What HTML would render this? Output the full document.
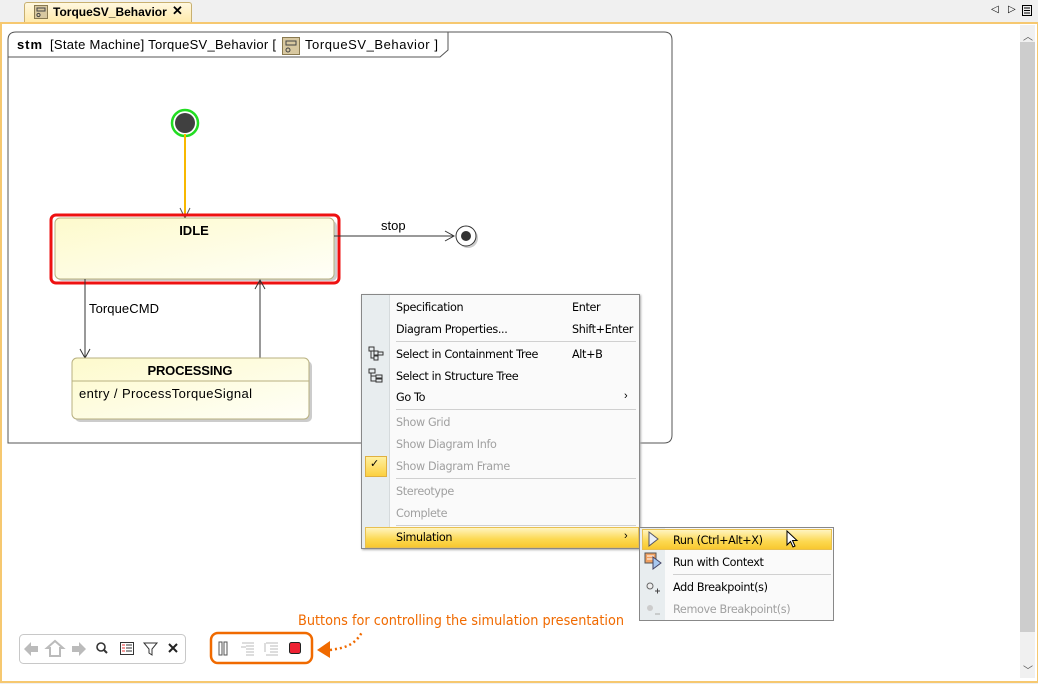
<!DOCTYPE html>
<html><head><style>
body{margin:0;width:1038px;height:684px;position:relative;background:#f0f0f0;font-family:"Liberation Sans",sans-serif;overflow:hidden}
.abs{position:absolute}
.mi{position:absolute;left:34px;color:#000;font-family:"DejaVu Sans","Liberation Sans",sans-serif;font-size:11.2px;letter-spacing:-0.35px}
.sc{position:absolute;left:210px;font-family:"DejaVu Sans","Liberation Sans",sans-serif;font-size:11.2px;letter-spacing:-0.35px}
.dis{color:#a0a0a0}
.sep{position:absolute;left:34px;right:3px;height:1px;background:#d0d0d0}
.sm{position:absolute;left:33px;font-family:'DejaVu Sans',sans-serif;font-size:11.2px;letter-spacing:-0.35px}
</style></head><body>
<div class="abs" style="left:24px;top:2px;width:166px;height:20px;background:linear-gradient(#fff8e0,#ffe9a8);border:1px solid #c8b070;border-bottom:none;border-radius:3px 3px 0 0"></div>
<svg class="abs" style="left:34px;top:5px" width="14" height="14"><rect x="0.5" y="0.5" width="13" height="13" fill="#d8c8a0" stroke="#8a7a50"/><rect x="3" y="3" width="8" height="3" fill="none" stroke="#444"/><circle cx="4.5" cy="10" r="1.6" fill="none" stroke="#444"/></svg>
<div class="abs" style="left:53px;top:5px;font-size:12px;font-weight:bold">TorqueSV_Behavior</div>
<div class="abs" style="left:172px;top:3px;font-size:13px;font-weight:bold">✕</div>
<div class="abs" style="left:991px;top:4px;font-size:10px">◁</div>
<div class="abs" style="left:1008px;top:4px;font-size:10px">▷</div>
<svg class="abs" style="left:1022px;top:5px" width="10" height="11"><rect x="0.5" y="0.5" width="9" height="10" fill="none" stroke="#000"/><path d="M2 3h6M2 5.5h6M2 8h6" stroke="#000"/></svg>
<div class="abs" style="left:0;top:22px;width:1035px;height:657px;background:#fff;border:2px solid #f6c870"></div>
<div class="abs" style="left:1020px;top:25px;width:15px;height:653px;background:#f0f0f0"></div>
<div class="abs" style="left:1020px;top:42px;width:15px;height:590px;background:#cdcdcd"></div>
<div class="abs" style="left:1023px;top:28px;font-size:10px;color:#555">︿</div>
<div class="abs" style="left:1023px;top:662px;font-size:10px;color:#555">﹀</div>
<svg class="abs" style="left:0;top:0" width="1020" height="684">
<defs><linearGradient id="g" x1="0" y1="0" x2="1" y2="1"><stop offset="0" stop-color="#fdfacc"/><stop offset="1" stop-color="#fffff8"/></linearGradient></defs>
<path d="M8 443 V40 Q8 32 16 32 H664 Q672 32 672 40 V435 Q672 443 664 443 Z" fill="none" stroke="#555" stroke-width="1"/>
<path d="M8 57 H440 L448 50 V32" fill="none" stroke="#555"/>
<text x="17" y="49" font-size="13" font-weight="bold" font-family="Liberation Sans" textLength="25">stm</text>
<text x="50" y="49" font-size="13" font-family="Liberation Sans" textLength="226">[State Machine] TorqueSV_Behavior [</text>
<rect x="282.5" y="37.5" width="17" height="17" fill="#d8c8a0" stroke="#8a7a50"/>
<rect x="286" y="41" width="10" height="4" fill="none" stroke="#444"/><circle cx="288" cy="50" r="2" fill="none" stroke="#444"/>
<text x="305" y="49" font-size="13" font-family="Liberation Sans" textLength="133">TorqueSV_Behavior ]</text>
<circle cx="185" cy="123" r="13" fill="#fff" stroke="#22dd22" stroke-width="2.5"/>
<circle cx="185" cy="123" r="10" fill="#404040"/>
<line x1="185" y1="134" x2="185" y2="218" stroke="#f8b800" stroke-width="2"/>
<path d="M180 208 L185 218 L190 208" fill="none" stroke="#555"/>
<rect x="51" y="215" width="288" height="68" rx="5" fill="none" stroke="#ee1111" stroke-width="3"/>
<rect x="57" y="221" width="280" height="60" rx="5" fill="#ccc"/>
<rect x="55" y="218" width="279" height="61" rx="5" fill="url(#g)" stroke="#b8b080"/>
<text x="194" y="235" font-size="13" font-weight="bold" text-anchor="middle" font-family="Liberation Sans">IDLE</text>
<line x1="334" y1="236" x2="454" y2="236" stroke="#333"/>
<path d="M445 231 L454 236 L445 241" fill="none" stroke="#333"/>
<circle cx="468" cy="238" r="10" fill="#ccc"/>
<circle cx="466" cy="236" r="10" fill="#fff" stroke="#333"/>
<circle cx="466" cy="236" r="5" fill="#333"/>
<text x="381" y="230" font-size="13" font-family="Liberation Sans">stop</text>
<line x1="85" y1="279" x2="85" y2="358" stroke="#333"/>
<path d="M80 349 L85 358 L90 349" fill="none" stroke="#333"/>
<text x="89" y="313" font-size="13" font-family="Liberation Sans" textLength="70">TorqueCMD</text>
<line x1="260" y1="358" x2="260" y2="280" stroke="#333"/>
<path d="M255 289 L260 280 L265 289" fill="none" stroke="#333"/>
<rect x="75" y="361" width="237" height="61" rx="5" fill="#ccc"/>
<rect x="72" y="358" width="237" height="61" rx="5" fill="url(#g)" stroke="#b8b080"/>
<line x1="72" y1="381" x2="309" y2="381" stroke="#b8b080"/>
<text x="190" y="375" font-size="13" font-weight="bold" text-anchor="middle" font-family="Liberation Sans" textLength="85">PROCESSING</text>
<text x="79" y="398" font-size="13" font-family="Liberation Sans" textLength="173">entry / ProcessTorqueSignal</text>
<rect x="19.5" y="634.5" width="166" height="29" rx="4" fill="#fff" stroke="#c8c8c8"/>
<path d="M24 649 L31 642 V646 H38 V652 H31 V656 Z" fill="#bbb"/>
<path d="M47 648 L55 641 L63 648 H60 V656 H50 V648 Z" fill="none" stroke="#bbb" stroke-width="2"/>
<path d="M86 649 L79 642 V646 H72 V652 H79 V656 Z" fill="#bbb"/>
<circle cx="101" cy="647" r="4" fill="none" stroke="#333" stroke-width="1.6"/><line x1="104" y1="650" x2="107" y2="653" stroke="#333" stroke-width="2"/>
<rect x="120.5" y="642.5" width="13" height="12" fill="none" stroke="#333"/><path d="M122 645h3M122 648h3M122 651h3" stroke="#e33"/><path d="M126 645h6M126 648h6M126 651h6" stroke="#333"/>
<path d="M144 643 H157 L152 649 V655 L149 653 V649 Z" fill="none" stroke="#333"/>
<path d="M169 644 L177 652 M177 644 L169 652" stroke="#222" stroke-width="2"/>
<rect x="211" y="633" width="101" height="30" rx="7" fill="none" stroke="#f06a00" stroke-width="2.5"/>
<rect x="219" y="642" width="3" height="13" fill="#fff" stroke="#555"/><rect x="224" y="642" width="3" height="13" fill="#fff" stroke="#555"/>
<path d="M242 643h12M246 646h8M246 649h8M246 652h8M246 655h8" stroke="#bbb"/><path d="M241 647 L246 647" stroke="#bbb"/>
<path d="M266 643h12M270 646h8M270 649h8M270 652h8M266 655h12M265 643v9" stroke="#bbb"/>
<rect x="289.5" y="642.5" width="11" height="11" rx="2" fill="#ee2233" stroke="#222"/>
<path d="M330 650 C345 648 355 645 362 632" fill="none" stroke="#f06a00" stroke-width="2.5" stroke-dasharray="2 3"/>
<path d="M317 650 L330 641 L330 658 Z" fill="#f06a00"/>
<text x="298" y="625" font-size="14" fill="#f06a00" font-family="DejaVu Sans, Liberation Sans" textLength="326" lengthAdjust="spacingAndGlyphs">Buttons for controlling the simulation presentation</text>
</svg>
<div class="abs" style="left:361px;top:294px;width:277px;height:253px;background:#fafafa;border:1px solid #888;box-shadow:1px 1px 2px #aaa">
 <div class="abs" style="left:0;top:0;width:27px;height:253px;background:#e8edef;border-right:1px solid #d5dadc"></div>
 <div class="mi" style="top:6px">Specification</div><div class="sc" style="top:6px">Enter</div>
 <div class="mi" style="top:28px">Diagram Properties...</div><div class="sc" style="top:28px">Shift+Enter</div>
 <div class="sep" style="top:46px"></div>
 <svg class="abs" style="left:6px;top:51px" width="16" height="15"><path d="M1 1h5v4H1zM6 5h4v4H6zM6 10h4v4H6zM10 6h5v3h-5zM3 5v7h3" fill="none" stroke="#333"/></svg>
 <div class="mi" style="top:53px">Select in Containment Tree</div><div class="sc" style="top:53px">Alt+B</div>
 <svg class="abs" style="left:6px;top:73px" width="16" height="15"><path d="M1 1h6v4H1zM8 7h6v3H8zM8 11h6v3H8zM3 5v8h5M3 8h5" fill="none" stroke="#333"/></svg>
 <div class="mi" style="top:75px">Select in Structure Tree</div>
 <div class="mi" style="top:96px">Go To</div><div class="abs" style="left:262px;top:95px;font-size:11px">›</div>
 <div class="sep" style="top:114px"></div>
 <div class="mi dis" style="top:121px">Show Grid</div>
 <div class="mi dis" style="top:143px">Show Diagram Info</div>
 <div class="abs" style="left:3px;top:161px;width:20px;height:19px;background:linear-gradient(#fff0a0,#fcd040);border:1px solid #e0b040"></div>
 <div class="abs" style="left:8px;top:162px;font-size:11px">✓</div>
 <div class="mi dis" style="top:165px">Show Diagram Frame</div>
 <div class="sep" style="top:183px"></div>
 <div class="mi dis" style="top:190px">Stereotype</div>
 <div class="mi dis" style="top:212px">Complete</div>
 <div class="sep" style="top:230px"></div>
 <div class="abs" style="left:3px;top:232px;width:272px;height:19px;background:linear-gradient(#fff4c0,#fcd850 60%,#f8c830);border:1px solid #e8c050"></div>
 <div class="mi" style="top:236px">Simulation</div><div class="abs" style="left:262px;top:235px;font-size:11px">›</div>
</div>
<div class="abs" style="left:639px;top:527px;width:193px;height:92px;background:#fafafa;border:1px solid #888">
 <div class="abs" style="left:0;top:0;width:25px;height:92px;background:#e8edef"></div>
 <div class="abs" style="left:2px;top:1px;width:188px;height:19px;background:linear-gradient(#fff4c0,#fcd850 60%,#f8c830);border:1px solid #e8c050"></div>
 <svg class="abs" style="left:8px;top:3px" width="12" height="16"><path d="M1 1 L10 8 L1 15 Z" fill="#e8eef8" stroke="#556"/></svg>
 <div class="sm" style="top:6px">Run (Ctrl+Alt+X)</div>
 <svg class="abs" style="left:146px;top:2px" width="14" height="20"><path d="M1 1 V15 L4.5 11.5 L7 17 L9 16 L6.5 10.5 H11 Z" fill="#fff" stroke="#000"/></svg>
 <svg class="abs" style="left:4px;top:24px" width="18" height="18"><rect x="1" y="1" width="11" height="10" fill="#f0a060" stroke="#555"/><path d="M3 4h7M3 7h7" stroke="#fff"/><path d="M9 5 L17 11 L9 17 Z" fill="#a8c8f0" stroke="#446"/></svg>
 <div class="sm" style="top:28px">Run with Context</div>
 <div class="abs" style="left:33px;right:2px;top:46px;height:1px;background:#d0d0d0"></div>
 <svg class="abs" style="left:6px;top:53px" width="16" height="14"><circle cx="4" cy="5" r="3" fill="#eee" stroke="#666"/><path d="M9 10h5M11.5 7.5v5" stroke="#444"/></svg>
 <div class="sm" style="top:53px">Add Breakpoint(s)</div>
 <svg class="abs" style="left:6px;top:75px" width="16" height="14"><circle cx="4" cy="5" r="3" fill="#ccc"/><path d="M9 11h5" stroke="#aaa"/></svg>
 <div class="sm dis" style="top:75px">Remove Breakpoint(s)</div>
</div>
</body></html>
